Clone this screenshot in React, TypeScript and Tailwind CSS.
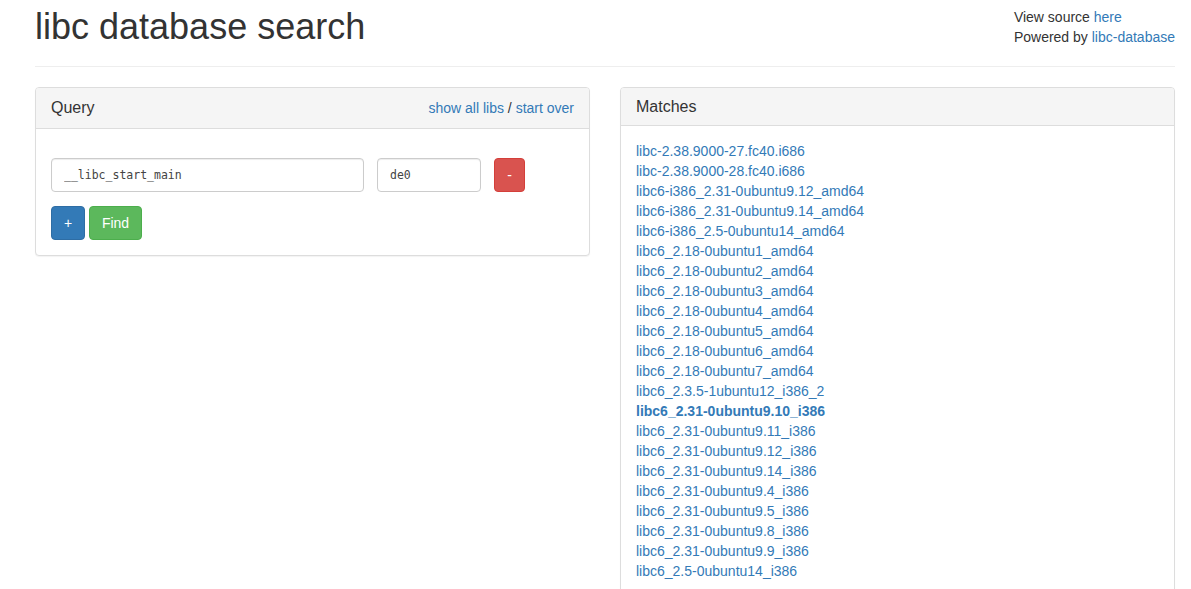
import React, { useState } from "react";

const matches = [
  "libc-2.38.9000-27.fc40.i686",
  "libc-2.38.9000-28.fc40.i686",
  "libc6-i386_2.31-0ubuntu9.12_amd64",
  "libc6-i386_2.31-0ubuntu9.14_amd64",
  "libc6-i386_2.5-0ubuntu14_amd64",
  "libc6_2.18-0ubuntu1_amd64",
  "libc6_2.18-0ubuntu2_amd64",
  "libc6_2.18-0ubuntu3_amd64",
  "libc6_2.18-0ubuntu4_amd64",
  "libc6_2.18-0ubuntu5_amd64",
  "libc6_2.18-0ubuntu6_amd64",
  "libc6_2.18-0ubuntu7_amd64",
  "libc6_2.3.5-1ubuntu12_i386_2",
  "libc6_2.31-0ubuntu9.10_i386",
  "libc6_2.31-0ubuntu9.11_i386",
  "libc6_2.31-0ubuntu9.12_i386",
  "libc6_2.31-0ubuntu9.14_i386",
  "libc6_2.31-0ubuntu9.4_i386",
  "libc6_2.31-0ubuntu9.5_i386",
  "libc6_2.31-0ubuntu9.8_i386",
  "libc6_2.31-0ubuntu9.9_i386",
  "libc6_2.5-0ubuntu14_i386",
];

const App = () => {
  const [symbol, setSymbol] = useState("__libc_start_main");
  const [addr, setAddr] = useState("de0");
  const selected = "libc6_2.31-0ubuntu9.10_i386";

  return (
    <div className="min-h-screen bg-white font-['Liberation_Sans',Arial,sans-serif] text-[14px] leading-5 text-[#333]">
      <div className="ml-[20px] w-[1170px] px-[15px]">
        <div className="flex items-start justify-between border-b border-[#eee] pt-[7px] pb-[9px]">
          <h1 className="mb-[10px] text-[36px] leading-[39.6px] font-normal">
            libc database search
          </h1>
          <div className="leading-5">
            <div>
              View source <a className="text-[#337ab7]" href="#">here</a>
            </div>
            <div>
              Powered by <a className="text-[#337ab7]" href="#">libc-database</a>
            </div>
          </div>
        </div>

        <div className="mt-[20px] grid grid-cols-2 items-start gap-[30px]">
          <div className="rounded-[4px] border border-[#ddd] bg-white shadow-[0_1px_1px_rgba(0,0,0,0.05)]">
            <div className="flex items-center justify-between rounded-t-[3px] border-b border-[#ddd] bg-[#f5f5f5] px-[15px] py-[10px]">
              <span className="text-[16px] leading-5">Query</span>
              <span className="leading-5">
                <a className="text-[#337ab7]" href="#">show all libs</a>
                {" / "}
                <a className="text-[#337ab7]" href="#">start over</a>
              </span>
            </div>
            <div className="px-[15px] pt-[29px] pb-[15px]">
              <div className="flex gap-[13px]">
                <input
                  value={symbol}
                  onChange={(e) => setSymbol(e.target.value)}
                  className="h-[34px] w-[313px] rounded-[4px] border border-[#ccc] px-[12px] font-['DejaVu_Sans_Mono',monospace] text-[11.5px] text-[#444] shadow-[inset_0_1px_1px_rgba(0,0,0,0.075)] outline-none"
                />
                <input
                  value={addr}
                  onChange={(e) => setAddr(e.target.value)}
                  className="h-[34px] w-[104px] rounded-[4px] border border-[#ccc] px-[12px] font-['DejaVu_Sans_Mono',monospace] text-[11.5px] text-[#444] shadow-[inset_0_1px_1px_rgba(0,0,0,0.075)] outline-none"
                />
                <button className="h-[34px] w-[31px] rounded-[4px] border border-[#d43f3a] bg-[#d9534f] text-white">
                  -
                </button>
              </div>
              <div className="mt-[14px] flex gap-[4px]">
                <button className="h-[34px] w-[34px] rounded-[4px] border border-[#2e6da4] bg-[#337ab7] text-white">
                  +
                </button>
                <button className="h-[34px] w-[53px] rounded-[4px] border border-[#4cae4c] bg-[#5cb85c] text-white">
                  Find
                </button>
              </div>
            </div>
          </div>

          <div className="rounded-[4px] border border-[#ddd] bg-white shadow-[0_1px_1px_rgba(0,0,0,0.05)]">
            <div className="rounded-t-[3px] border-b border-[#ddd] bg-[#f5f5f5] px-[15px] py-[10px]">
              <h3 className="text-[16px] leading-[17.6px] font-normal">Matches</h3>
            </div>
            <div className="p-[15px]">
              {matches.map((m) => (
                <div key={m}>
                  <a
                    href="#"
                    className={
                      m === selected
                        ? "font-bold text-[#337ab7]"
                        : "text-[#337ab7]"
                    }
                  >
                    {m}
                  </a>
                </div>
              ))}
            </div>
          </div>
        </div>
      </div>
    </div>
  );
};

export default App;
